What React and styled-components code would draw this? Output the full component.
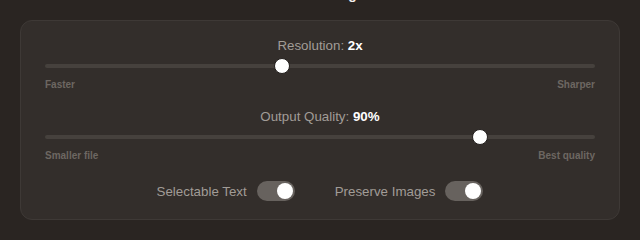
import { useState } from "react";
import styled, { createGlobalStyle } from "styled-components";

const GlobalStyle = createGlobalStyle`
  html, body {
    margin: 0;
    padding: 0;
    background: #2a2522;
    font-family: "Liberation Sans", Arial, sans-serif;
    overflow: hidden;
  }
`;

const Page = styled.div`
  width: 640px;
  height: 240px;
  box-sizing: border-box;
  padding: 0 20px;
`;

const Title = styled.h2`
  margin: -14px 0 0;
  font-size: 14px;
  line-height: 16px;
  font-weight: 600;
  text-align: center;
  color: #f2efec;
  padding-left: 34px;
`;

const Panel = styled.div`
  margin-top: 18px;
  box-sizing: border-box;
  width: 600px;
  height: 200px;
  background: #332e2b;
  border: 1px solid #3e3936;
  border-radius: 12px;
  padding: 17px 24px 0;
  display: flex;
  flex-direction: column;
`;

const Section = styled.div`
  display: flex;
  flex-direction: column;
  gap: 4px;
  margin-bottom: ${(p) => p.$space || 0}px;
`;

const Label = styled.div`
  text-align: center;
  font-size: 13.33px;
  line-height: 16px;
  color: #a19c97;

  b {
    color: #ffffff;
    font-weight: 700;
  }
`;

const Range = styled.input.attrs({ type: "range" })`
  -webkit-appearance: none;
  appearance: none;
  display: block;
  width: 100%;
  height: 16px;
  margin: 0;
  background: transparent;
  outline: none;

  &::-webkit-slider-runnable-track {
    height: 4px;
    border-radius: 2px;
    background: #46413d;
  }

  &::-webkit-slider-thumb {
    -webkit-appearance: none;
    box-sizing: border-box;
    width: 16px;
    height: 16px;
    margin-top: -6px;
    border-radius: 50%;
    background: #ffffff;
    border: 1.5px solid #231f1d;
  }
`;

const Ends = styled.div`
  display: flex;
  justify-content: space-between;
  margin-top: 1px;
  font-size: 10px;
  line-height: 12px;
  font-weight: 700;
  color: #6d6762;
`;

const Toggles = styled.div`
  display: flex;
  justify-content: center;
  gap: 40px;
`;

const ToggleItem = styled.label`
  display: flex;
  align-items: center;
  gap: 10px;
  font-size: 13.33px;
  color: #a19c97;
  cursor: pointer;
`;

const Switch = styled.span`
  position: relative;
  width: 38px;
  height: 20px;
  border-radius: 10px;
  background: ${(p) => (p.$on ? "#67625e" : "#46413d")};
  transition: background 0.2s;

  &::after {
    content: "";
    position: absolute;
    top: 2px;
    left: ${(p) => (p.$on ? "20px" : "2px")};
    width: 16px;
    height: 16px;
    border-radius: 50%;
    background: #ffffff;
    transition: left 0.2s;
  }
`;

const SliderBlock = ({ label, value, min, max, step, onChange, left, right, space }) => (
  <Section $space={space}>
    <Label>
      {label}: <b>{value.text}</b>
    </Label>
    <Range
      min={min}
      max={max}
      step={step}
      value={value.raw}
      onChange={(e) => onChange(Number(e.target.value))}
    />
    <Ends>
      <span>{left}</span>
      <span>{right}</span>
    </Ends>
  </Section>
);

const App = () => {
  const [scale, setScale] = useState(2);
  const [quality, setQuality] = useState(90);
  const [selectable, setSelectable] = useState(true);
  const [preserve, setPreserve] = useState(true);

  return (
    <Page>
      <GlobalStyle />
      <Title>Settings</Title>
      <Panel>
        <SliderBlock
          label="Resolution"
          value={{ raw: scale, text: `${scale}x` }}
          min={0.5}
          max={4}
          step={0.5}
          onChange={setScale}
          left="Faster"
          right="Sharper"
          space={18}
        />
        <SliderBlock
          label="Output Quality"
          value={{ raw: quality, text: `${quality}%` }}
          min={50}
          max={100}
          step={5}
          onChange={setQuality}
          left="Smaller file"
          right="Best quality"
          space={19}
        />
        <Toggles>
          <ToggleItem onClick={() => setSelectable(!selectable)}>
            Selectable Text
            <Switch $on={selectable} />
          </ToggleItem>
          <ToggleItem onClick={() => setPreserve(!preserve)}>
            Preserve Images
            <Switch $on={preserve} />
          </ToggleItem>
        </Toggles>
      </Panel>
    </Page>
  );
};

export default App;
